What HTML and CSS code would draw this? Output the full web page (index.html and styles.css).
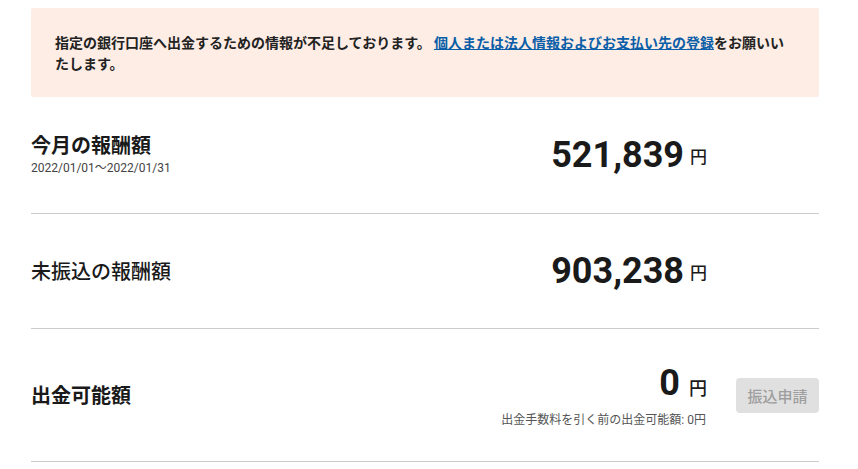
FILE: index.html
```html
<!DOCTYPE html>
<html lang="ja">
<head>
<meta charset="utf-8">
<link rel="stylesheet" href="styles.css">
</head>
<body>
<div class="page">
  <div class="alert">指定の銀行口座へ出金するための情報が不足しております。 <a href="#" class="alert-link">個人または法人情報およびお支払い先の登録</a>をお願いいたします。</div>

  <div class="row row-first">
    <div class="label">
      <div class="title">今月の報酬額</div>
      <div class="period">2022/01/01〜2022/01/31</div>
    </div>
    <div class="amount-block">
      <div class="amount"><span class="num">521,839</span><span class="unit">円</span></div>
    </div>
    <div class="action"></div>
  </div>

  <div class="row row-second">
    <div class="label">
      <div class="title title-medium">未振込の報酬額</div>
    </div>
    <div class="amount-block">
      <div class="amount"><span class="num">903,238</span><span class="unit">円</span></div>
    </div>
    <div class="action"></div>
  </div>

  <div class="row row-third">
    <div class="label">
      <div class="title">出金可能額</div>
    </div>
    <div class="amount-block">
      <div class="amount amount-base"><span class="num">0</span><span class="unit unit-wide">円</span></div>
      <div class="note">出金手数料を引く前の出金可能額: 0円</div>
    </div>
    <div class="action"><button class="btn" disabled>振込申請</button></div>
  </div>
</div>
</body>
</html>
```

FILE: styles.css
```css
html, body {
  margin: 0;
  padding: 0;
  background: #ffffff;
}
body {
  font-family: Roboto, "Noto Sans CJK JP", sans-serif;
  color: #212121;
}
.page {
  margin: 8px 39px 0 31px;
}
.alert {
  background: #fdede4;
  padding: 24px 24px 23px 24px;
  font-family: "Noto Sans CJK JP", sans-serif;
  font-size: 14px;
  font-weight: 700;
  line-height: 21px;
  color: #222222;
  border-radius: 2px;
}
.alert-link {
  color: #0b5ea8;
  text-decoration: underline;
}
.row {
  display: grid;
  grid-template-columns: 1fr auto 83px;
  column-gap: 29px;
  align-items: center;
  border-bottom: 1px solid #cccccc;
}
.row-first {
  padding: 35px 0 36px;
}
.row-second {
  padding: 36px 0 36px;
}
.row-third {
  padding: 33px 0 33px;
}
.title {
  font-family: "Noto Sans CJK JP", sans-serif;
  font-size: 20px;
  font-weight: 700;
  line-height: 26px;
  color: #1a1a1a;
}
.title-medium {
  font-weight: 500;
}
.period {
  font-size: 12px;
  line-height: 17px;
  color: #444444;
  margin-top: 2px;
}
.amount-block {
  display: flex;
  flex-direction: column;
  align-items: flex-end;
}
.amount {
  display: flex;
  align-items: center;
  height: 42px;
}
.amount-base {
  align-items: baseline;
}
.num {
  font-family: Roboto, sans-serif;
  font-size: 36px;
  font-weight: 700;
  line-height: 42px;
  color: #1a1a1a;
}
.unit {
  font-family: "Noto Sans CJK JP", sans-serif;
  font-size: 17px;
  font-weight: 500;
  line-height: 20px;
  margin-left: 6px;
  margin-top: 2px;
  color: #1a1a1a;
}
.unit-wide {
  margin-left: 9px;
  margin-top: 0;
  font-size: 18px;
}
.note {
  font-family: Roboto, "Noto Sans CJK JP", sans-serif;
  font-size: 12px;
  line-height: 16px;
  color: #555555;
  margin-top: 8px;
  margin-right: 1px;
}
.btn {
  width: 83px;
  height: 35px;
  border: none;
  border-radius: 4px;
  background: #e0e0e0;
  color: #9e9e9e;
  font-family: "Noto Sans CJK JP", sans-serif;
  font-size: 15px;
  font-weight: 500;
  padding: 0;
}
```
